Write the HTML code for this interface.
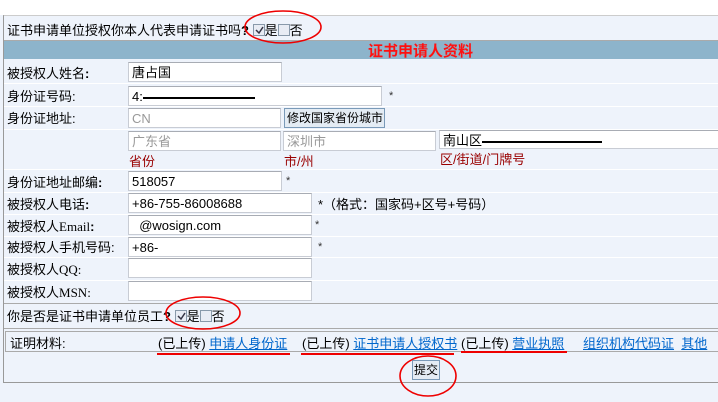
<!DOCTYPE html>
<html><head><meta charset="utf-8"><style>
*{margin:0;padding:0;box-sizing:border-box}
body{width:718px;height:402px;background:#eef3fb;position:relative;overflow:hidden;font-family:"Liberation Sans","Noto Sans CJK SC","WenQuanYi Zen Hei",sans-serif;font-size:12px;color:#000}
.a{position:absolute;white-space:nowrap}
.inp{position:absolute;background:#fff;border:1px solid #c8ccd4;border-top-color:#a8acb4;height:20px;font-size:13px;padding:1px 3px;line-height:17px}
.gray{color:#999}
.lab{position:absolute;left:7px;font-size:13px}
.sep{position:absolute;left:4px;right:0;height:1px;background:#fff}
.red{color:#990000;font-size:13px}
.star{position:absolute;font-size:11px;color:#333}
a{color:#0066cc;text-decoration:underline}
.cb{display:inline-block;width:12px;height:12px;border:1px solid #8899aa;background:#e8ecf4;vertical-align:-1px;position:relative}
.cb svg{position:absolute;left:1px;top:1px}
</style></head><body>
<div class="a" style="left:0;top:0;width:718px;height:15px;background:#fff"></div>
<div class="a" style="left:3px;top:15px;width:716px;height:368px;border:1px solid #999;border-right:none;border-top-color:#aaa;background:#eef3fb"></div>
<div class="a" style="left:4px;top:15px;width:714px;height:1px;background:#ccc"></div>
<div class="a" style="left:7px;top:20px;font-size:13px">证书申请单位授权你本人代表申请证书吗<b>?</b> <span class="cb"><svg width="9" height="9"><path d="M1 4 L4 7 L8 1" fill="none" stroke="#334" stroke-width="1.5"/></svg></span>是<span class="cb"></span>否</div>
<div class="a" style="left:4px;top:40px;width:714px;height:1px;background:#aaa"></div>
<div class="a" style="left:4px;top:41px;width:714px;height:18px;background:#8db4cb"></div>
<div class="a" style="left:368px;top:40px;font-size:15px;font-weight:bold;color:#ff1010">证书申请人资料</div>

<div class="lab" style="top:63px">被授权人姓名<b>:</b></div>
<div class="inp" style="left:128px;top:62px;width:154px">唐占国</div>
<div class="sep" style="top:83px"></div>
<div class="lab" style="top:86px">身份证号码:</div>
<div class="inp" style="left:128px;top:86px;width:254px">4:<span style="display:inline-block;width:112px;border-bottom:2px solid #000;vertical-align:2px"></span></div>
<div class="star" style="left:389px;top:90px">*</div>
<div class="sep" style="top:106px"></div>
<div class="lab" style="top:108px">身份证地址:</div>
<div class="inp gray" style="left:128px;top:108px;width:153px">CN</div>
<div class="a" style="left:284px;top:108px;width:101px;height:20px;border:1px solid #7a9ab8;background:#e4ecf4;font-size:12px;line-height:18px;padding-left:2px">修改国家省份城市</div>
<div class="sep" style="top:129px"></div>
<div class="inp gray" style="left:128px;top:131px;width:153px">广东省</div>
<div class="inp gray" style="left:283px;top:131px;width:153px">深圳市</div>
<div class="inp" style="left:439px;top:130px;width:280px;height:19px">南山区<span style="display:inline-block;width:120px;border-bottom:2px solid #000;vertical-align:2px"></span></div>
<div class="a red" style="left:129px;top:151px">省份</div>
<div class="a red" style="left:284px;top:151px">市/州</div>
<div class="a red" style="left:440px;top:149px">区/街道/门牌号</div>
<div class="sep" style="top:169px"></div>
<div class="lab" style="top:172px">身份证地址邮编<b>:</b></div>
<div class="inp" style="left:128px;top:171px;width:154px">518057</div>
<div class="star" style="left:286px;top:175px">*</div>
<div class="sep" style="top:192px"></div>
<div class="lab" style="top:194px">被授权人电话<b>:</b></div>
<div class="inp" style="left:128px;top:193px;width:184px">+86-755-86008688</div>
<div class="a" style="left:318px;top:194px;font-size:13px">*（格式：国家码+区号+号码）</div>
<div class="sep" style="top:214px"></div>
<div class="lab" style="top:216px">被授权人<span style="font-family:'Liberation Serif'">Email</span><b>:</b></div>
<div class="inp" style="left:128px;top:215px;width:184px">&nbsp;&nbsp;@wosign.com</div>
<div class="star" style="left:315px;top:219px">*</div>
<div class="sep" style="top:236px"></div>
<div class="lab" style="top:237px">被授权人手机号码:</div>
<div class="inp" style="left:128px;top:237px;width:184px">+86-</div>
<div class="star" style="left:318px;top:241px">*</div>
<div class="sep" style="top:257px"></div>
<div class="lab" style="top:259px">被授权人<span style="font-family:'Liberation Serif'">QQ:</span></div>
<div class="inp" style="left:128px;top:258px;width:184px"></div>
<div class="sep" style="top:280px"></div>
<div class="lab" style="top:282px">被授权人<span style="font-family:'Liberation Serif'">MSN:</span></div>
<div class="inp" style="left:128px;top:281px;width:184px"></div>
<div class="a" style="left:4px;top:303px;width:714px;height:1px;background:#aaa"></div>
<div class="lab" style="top:306px;font-size:13px">你是否是证书申请单位员工<b>?</b> <span class="cb"><svg width="9" height="9"><path d="M1 4 L4 7 L8 1" fill="none" stroke="#334" stroke-width="1.5"/></svg></span>是<span class="cb"></span>否</div>
<div class="a" style="left:4px;top:328px;width:714px;height:1px;background:#aaa"></div>
<div class="a" style="left:5px;top:331px;width:714px;height:21px;border:1px solid #aaa;border-right:none"></div>
<div class="a" style="left:10px;top:333px;font-size:13px">证明材料:</div>
<div class="a" style="left:158px;top:333px;font-size:13px">(已上传) <a>申请人身份证</a></div>
<div class="a" style="left:302px;top:333px;font-size:13px">(已上传) <a>证书申请人授权书</a></div>
<div class="a" style="left:461px;top:333px;font-size:13px">(已上传) <a>营业执照</a></div>
<div class="a" style="left:583px;top:333px;font-size:13px"><a>组织机构代码证</a>&nbsp;&nbsp;<a>其他</a></div>
<div class="a" style="left:157px;top:353px;width:133px;height:2px;background:#e00"></div>
<div class="a" style="left:301px;top:353px;width:153px;height:2px;background:#e00"></div>
<div class="a" style="left:461px;top:351px;width:106px;height:2px;background:#e00"></div>
<div class="a" style="left:412px;top:360px;width:28px;height:20px;border:1px solid #7a9ab8;background:#e4ecf4;font-size:12px;line-height:18px;text-align:center">提交</div>
<svg class="a" style="left:0;top:0" width="718" height="402">
<g fill="none" stroke="#e00" stroke-width="1.6">
<ellipse cx="283" cy="27" rx="38" ry="16"/>
<ellipse cx="203" cy="313" rx="37" ry="16"/>
<ellipse cx="428" cy="376" rx="28" ry="20"/>
</g></svg>
</body></html>
